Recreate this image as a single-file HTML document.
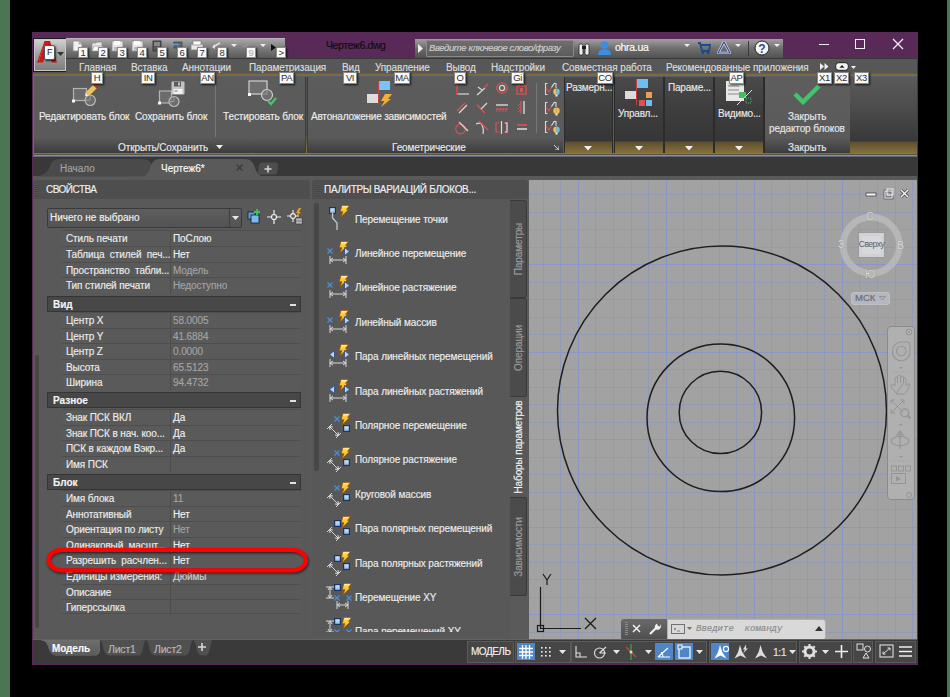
<!DOCTYPE html>
<html><head><meta charset="utf-8"><style>
*{margin:0;padding:0;box-sizing:border-box}
html,body{width:950px;height:697px;overflow:hidden;background:#000;font-family:"Liberation Sans",sans-serif;position:relative}
.a{position:absolute}
.t{position:absolute;white-space:nowrap;font-size:10px;line-height:12px;color:#e8e8e8;-webkit-text-stroke:0.15px currentColor}
.kt{position:absolute;background:#f8f8f8;color:#303030;font-size:9.5px;line-height:9px;text-align:center;border:1px solid #8a8a8a;box-shadow:1px 1px 2px rgba(0,0,0,.75);letter-spacing:-0.4px;overflow:hidden}
</style></head><body>
<div class="a" style="left:0px;top:0px;width:10px;height:697px;background:#4b7553"></div>
<div class="a" style="left:947px;top:0px;width:3px;height:697px;background:#4b7553"></div>
<div class="a" style="left:32px;top:32px;width:886px;height:633px;background:#592a58"></div>
<div class="a" style="left:33px;top:38px;width:34px;height:34px;background:linear-gradient(#d2d2d2,#9a9a9a 55%,#7c7c7c);border:1px solid #1e1e1e;box-shadow:inset 0 0 0 1px #c8c8c8"></div>
<svg class="a" style="left:36px;top:40px;" width="22" height="23" viewBox="0 0 22 23"><path d="M1 22.5 L8.5 1 L14 1 L21 22.5 L16 22.5 L11.5 9 L7 22.5Z" fill="#c81a1c"/><path d="M3 20 L9 3" stroke="#e83a3a" stroke-width="1.2" stroke-dasharray="2 1.5"/><path d="M13 4 L18 20" stroke="#8a1010" stroke-width=".8" stroke-dasharray="1 2"/></svg>
<div class="kt" style="left:44px;top:45px;width:11px;height:15px;line-height:13px;font-size:9px;border-radius:2px;border-color:#555;color:#222">F</div>
<svg class="a" style="left:57px;top:52px;" width="8" height="5" viewBox="0 0 8 5"><path d="M0 0H7L3.5 4Z" fill="#333"/></svg>
<div class="a" style="left:66px;top:38px;width:219px;height:20px;background:linear-gradient(#a8a8a8,#7a7a7a 50%,#5a5a5a);border-top:1px solid #b8b8b8"></div>
<svg class="a" style="left:72px;top:40px;" width="12" height="12" viewBox="0 0 12 12"><path d="M1 1H7L10 4V11H1Z" fill="#f0f0f0" stroke="#8a8a8a" stroke-width=".8"/><path d="M7 1V4H10" fill="#ccc" stroke="#8a8a8a" stroke-width=".6"/></svg>
<svg class="a" style="left:91px;top:40px;" width="13" height="12" viewBox="0 0 13 12"><path d="M1 3H5L6 2H11V11H1Z" fill="#e8e8e8" stroke="#8a8a8a" stroke-width=".8"/><path d="M3 6H12L10 11H1Z" fill="#f8f8f8" stroke="#8a8a8a" stroke-width=".6"/></svg>
<svg class="a" style="left:111px;top:40px;" width="13" height="12" viewBox="0 0 13 12"><rect x="1" y="1" width="11" height="10" fill="#e6e6e6" stroke="#8a8a8a" stroke-width=".8"/><rect x="3" y="1" width="6" height="4" fill="#fafafa"/><rect x="3" y="7" width="7" height="4" fill="#bdbdbd"/></svg>
<svg class="a" style="left:131px;top:40px;" width="13" height="12" viewBox="0 0 13 12"><rect x="1" y="1" width="11" height="10" fill="#e6e6e6" stroke="#8a8a8a" stroke-width=".8"/><rect x="3" y="1" width="6" height="4" fill="#fafafa"/><rect x="3" y="7" width="7" height="4" fill="#bdbdbd"/></svg>
<svg class="a" style="left:151px;top:40px;" width="12" height="12" viewBox="0 0 12 12"><rect x="2" y="1" width="8" height="10" fill="#5a5a5a" stroke="#2a2a2a" stroke-width=".8"/><rect x="3" y="2" width="6" height="4" fill="#888"/></svg>
<svg class="a" style="left:171px;top:40px;" width="13" height="12" viewBox="0 0 13 12"><rect x="3" y="2" width="8" height="6" fill="#666" stroke="#333" stroke-width=".6"/><path d="M1 6Q4 3 8 5" fill="none" stroke="#5aa0e8" stroke-width="1.3"/></svg>
<svg class="a" style="left:190px;top:40px;" width="14" height="12" viewBox="0 0 14 12"><rect x="1" y="4" width="12" height="6" fill="#e8e8e8" stroke="#777" stroke-width=".7"/><rect x="3" y="1" width="8" height="4" fill="#f8f8f8" stroke="#777" stroke-width=".6"/></svg>
<svg class="a" style="left:211px;top:41px;" width="12" height="10" viewBox="0 0 12 10"><path d="M2 6L9 2" stroke="#e0e0e0" stroke-width="1.5"/><path d="M1 6L4 3V8Z" fill="#e0e0e0"/></svg>
<svg class="a" style="left:240px;top:41px;" width="12" height="10" viewBox="0 0 12 10"><path d="M3 6L10 3" stroke="#9a9a9a" stroke-width="1.3"/></svg>
<div class="kt" style="left:78px;top:47px;width:10px;height:11px;line-height:9px">1</div>
<div class="kt" style="left:98px;top:47px;width:10px;height:11px;line-height:9px">2</div>
<div class="kt" style="left:117px;top:47px;width:10px;height:11px;line-height:9px">3</div>
<div class="kt" style="left:137px;top:47px;width:10px;height:11px;line-height:9px">4</div>
<div class="kt" style="left:157px;top:47px;width:10px;height:11px;line-height:9px">5</div>
<div class="kt" style="left:177px;top:47px;width:10px;height:11px;line-height:9px">6</div>
<div class="kt" style="left:197px;top:47px;width:10px;height:11px;line-height:9px">7</div>
<div class="kt" style="left:217px;top:47px;width:10px;height:11px;line-height:9px">8</div>
<div class="kt" style="left:246px;top:47px;width:10px;height:11px;line-height:9px;color:#aaa">9</div>
<svg class="a" style="left:231px;top:44px;" width="6" height="4" viewBox="0 0 6 4"><path d="M0 0H6L3 3Z" fill="#eee"/></svg>
<svg class="a" style="left:260px;top:44px;" width="6" height="4" viewBox="0 0 6 4"><path d="M0 0H6L3 3Z" fill="#eee"/></svg>
<svg class="a" style="left:271px;top:44px;" width="5" height="7" viewBox="0 0 5 7"><path d="M0 0L5 3.5L0 7Z" fill="#111"/></svg>
<div class="kt" style="left:276px;top:47px;width:10px;height:11px;line-height:9px">&gt;</div>
<div class="t" style="left:326px;top:39px;color:#0e0e0e;font-size:10.5px;line-height:13px;letter-spacing:-0.4px">Чертеж6.dwg</div>
<div class="a" style="left:415px;top:39px;width:160px;height:19px;background:linear-gradient(#a0a0a0,#6a6a6a 50%,#505050)"></div>
<svg class="a" style="left:418px;top:44px;" width="6" height="9" viewBox="0 0 6 9"><path d="M0 0L5 4.5L0 9Z" fill="#eee"/></svg>
<div class="a" style="left:426px;top:40px;width:148px;height:17px;background:linear-gradient(#6e6e6e,#5c5c5c);border:1px solid #8a8a8a;border-radius:1px"></div>
<div class="t" style="left:429px;top:42px;color:#cfcfcf;font-style:italic;font-size:9.5px;letter-spacing:-0.4px">Введите ключевое слово/фразу</div>
<div class="a" style="left:575px;top:39px;width:208px;height:19px;background:linear-gradient(#a0a0a0,#6e6e6e 50%,#525252)"></div>
<svg class="a" style="left:578px;top:41px;" width="13" height="15" viewBox="0 0 13 15"><rect x="1" y="3" width="4" height="11" rx="1.5" fill="#eee" stroke="#222" stroke-width=".8"/><rect x="7" y="3" width="4" height="11" rx="1.5" fill="#eee" stroke="#222" stroke-width=".8"/><rect x="4" y="5" width="4" height="3" fill="#222"/></svg>
<svg class="a" style="left:597px;top:40px;" width="15" height="16" viewBox="0 0 15 16"><circle cx="7.5" cy="5" r="3.8" fill="#3d8de0"/><path d="M1 15 Q1 9 7.5 9 Q14 9 14 15Z" fill="#3d8de0"/></svg>
<div class="t" style="left:615px;top:41px;color:#fff;font-size:10.5px;line-height:13px;letter-spacing:-0.3px">ohra.ua</div>
<svg class="a" style="left:684px;top:44px;" width="6" height="4" viewBox="0 0 6 4"><path d="M0 0H6L3 3Z" fill="#eee"/></svg>
<svg class="a" style="left:697px;top:41px;" width="14" height="14" viewBox="0 0 14 14"><path d="M1 2H3L5 10H12L13 4H4" fill="none" stroke="#1a4a90" stroke-width="1.8"/><circle cx="6" cy="12" r="1.4" fill="#1a4a90"/><circle cx="11" cy="12" r="1.4" fill="#1a4a90"/></svg>
<svg class="a" style="left:717px;top:41px;" width="14" height="13" viewBox="0 0 14 13"><path d="M7 1L13 12H1Z" fill="none" stroke="#e8e8f8" stroke-width="2.5"/><path d="M7 1L13 12H1Z" fill="none" stroke="#2a4a8a" stroke-width="1.2"/></svg>
<svg class="a" style="left:735px;top:44px;" width="6" height="4" viewBox="0 0 6 4"><path d="M0 0H6L3 3Z" fill="#eee"/></svg>
<div class="a" style="left:748px;top:41px;width:1px;height:15px;background:#3a3a3a"></div>
<svg class="a" style="left:754px;top:40px;" width="16" height="16" viewBox="0 0 16 16"><circle cx="8" cy="8" r="7" fill="#f4f4f4" stroke="#222" stroke-width="1"/><text x="8" y="12.5" font-size="12" font-weight="bold" text-anchor="middle" fill="#2a4a90" font-family="Liberation Sans">?</text></svg>
<svg class="a" style="left:774px;top:44px;" width="6" height="4" viewBox="0 0 6 4"><path d="M0 0H6L3 3Z" fill="#eee"/></svg>
<div class="a" style="left:819px;top:44px;width:10px;height:1px;background:#f0f0f0"></div>
<div class="a" style="left:855px;top:39px;width:10px;height:10px;border:1px solid #f0f0f0"></div>
<svg class="a" style="left:892px;top:38px;" width="12" height="12" viewBox="0 0 12 12"><path d="M1 1L11 11M11 1L1 11" stroke="#f0f0f0" stroke-width="1.3"/></svg>
<div class="a" style="left:66px;top:58px;width:851px;height:17px;background:#575757"></div>
<div class="a" style="left:66px;top:58px;width:851px;height:1px;background:#383838"></div>
<div class="a" style="left:33px;top:72px;width:33px;height:3px;background:#555"></div>
<div class="t" style="left:79px;top:62px;color:#dcdcdc;font-size:10px;letter-spacing:-0.1px">Главная</div>
<div class="t" style="left:131px;top:62px;color:#dcdcdc;font-size:10px;letter-spacing:-0.1px">Вставка</div>
<div class="t" style="left:182px;top:62px;color:#dcdcdc;font-size:10px;letter-spacing:-0.1px">Аннотации</div>
<div class="t" style="left:249px;top:62px;color:#dcdcdc;font-size:10px;letter-spacing:-0.1px">Параметризация</div>
<div class="t" style="left:342px;top:62px;color:#dcdcdc;font-size:10px;letter-spacing:-0.1px">Вид</div>
<div class="t" style="left:375px;top:62px;color:#dcdcdc;font-size:10px;letter-spacing:-0.1px">Управление</div>
<div class="t" style="left:446px;top:62px;color:#dcdcdc;font-size:10px;letter-spacing:-0.1px">Вывод</div>
<div class="t" style="left:491px;top:62px;color:#dcdcdc;font-size:10px;letter-spacing:-0.1px">Надстройки</div>
<div class="t" style="left:562px;top:62px;color:#dcdcdc;font-size:10px;letter-spacing:-0.1px">Совместная работа</div>
<div class="t" style="left:666px;top:62px;color:#dcdcdc;font-size:10px;letter-spacing:-0.1px">Рекомендованные приложения</div>
<div class="a" style="left:33px;top:73px;width:884px;height:84px;background:#5b5b5b"></div>
<div class="a" style="left:33px;top:73px;width:884px;height:1px;background:#5a5d6c"></div>
<div class="a" style="left:33px;top:74px;width:884px;height:2px;background:#7d6c3a"></div>
<div class="a" style="left:33px;top:76px;width:884px;height:1px;background:#5a5d6c"></div>
<div class="a" style="left:33px;top:153px;width:884px;height:1px;background:#8a7538"></div>
<div class="a" style="left:33px;top:154px;width:884px;height:1px;background:#5a5440"></div>
<div class="a" style="left:33px;top:155px;width:884px;height:1px;background:#a89050"></div>
<div class="a" style="left:33px;top:156px;width:884px;height:1px;background:#60667a"></div>
<svg class="a" style="left:820px;top:63px;" width="9" height="7" viewBox="0 0 9 7"><path d="M0 0L4 3.5L0 7ZM4.5 0L8.5 3.5L4.5 7Z" fill="#eee"/></svg>
<svg class="a" style="left:835px;top:62px;" width="14" height="9" viewBox="0 0 14 9"><rect x=".7" y=".7" width="12.6" height="7.6" rx="3" fill="#f4f4f4" stroke="#222" stroke-width="1"/><path d="M4.5 5.8H9.5L7 3Z" fill="#222"/></svg>
<svg class="a" style="left:851px;top:66px;" width="5" height="3" viewBox="0 0 5 3"><path d="M0 0H5L2.5 3Z" fill="#eee"/></svg>
<div class="a" style="left:33px;top:77px;width:273px;height:76px;background:linear-gradient(#5c5c5c 0%,#5a5a5a 80%,#3c3c3c 100%)"></div>
<div class="a" style="left:305px;top:77px;width:1px;height:76px;background:#3c3c3c"></div>
<div class="a" style="left:306px;top:77px;width:1px;height:76px;background:linear-gradient(#505050,#505050 75%,#8a7538)"></div>
<div class="a" style="left:307px;top:77px;width:1px;height:76px;background:#3c3c3c"></div>
<svg class="a" style="left:72px;top:87px;" width="26" height="22" viewBox="0 0 26 22"><rect x="1.5" y="1.5" width="13" height="12" fill="#6c6c6c" stroke="#b4b4b4" stroke-width="1.2"/><circle cx="18.2" cy="13.3" r="5.2" fill="#727272" fill-opacity=".8" stroke="#bcbcbc" stroke-width="1.2"/><path d="M18.2 8.5V13.3H13.5" stroke="#9a9a9a" fill="none"/><rect x="0" y="12.5" width="3" height="3" fill="#f4f4f4"/></svg>
<svg class="a" style="left:84px;top:82px;" width="14" height="14" viewBox="0 0 14 14"><path d="M1.5 10.5L9 3L12.5 6.5L5 14Z" fill="#f0c060" stroke="#c09040" stroke-width=".5"/><path d="M9.5 2.5L11 1L14 4L12.5 5.5Z" fill="#d82020"/><path d="M1.5 10.5L5 14L1 15Z" fill="#e8e8e8"/></svg>
<svg class="a" style="left:158px;top:89px;" width="26" height="22" viewBox="0 0 26 22"><rect x="1.5" y="2" width="12" height="12" fill="#6c6c6c" stroke="#b4b4b4" stroke-width="1.2"/><circle cx="16" cy="12.5" r="5" fill="#727272" fill-opacity=".8" stroke="#bcbcbc" stroke-width="1.2"/><path d="M16 7.5V12.5H11" stroke="#9a9a9a" fill="none"/><rect x="0" y="12.5" width="3" height="3" fill="#f4f4f4"/></svg>
<svg class="a" style="left:171px;top:81px;" width="14" height="14" viewBox="0 0 14 14"><rect x=".5" y=".5" width="13" height="13" rx="1" fill="#c4c4c4"/><rect x="3" y="1" width="7" height="4.5" fill="#5a5a5a"/><rect x="7" y="1.5" width="2" height="3" fill="#c4c4c4"/><rect x="2.5" y="8" width="9" height="5" fill="#f0f0f0"/><rect x="3.5" y="9.5" width="3" height="1" fill="#777"/></svg>
<div class="t" style="left:39px;top:111px;font-size:10px;letter-spacing:-0.15px;color:#ececec">Редактировать блок</div>
<div class="t" style="left:135px;top:111px;font-size:10px;letter-spacing:-0.1px;color:#ececec">Сохранить блок</div>
<div class="a" style="left:215px;top:85px;width:1px;height:52px;background:#777"></div>
<svg class="a" style="left:248px;top:80px;" width="26" height="22" viewBox="0 0 26 22"><rect x="1" y="1" width="18" height="13" fill="#6e6e6e" stroke="#d0d0d0" stroke-width="1.2"/><circle cx="19" cy="15" r="5.5" fill="#777" fill-opacity=".7" stroke="#d0d0d0" stroke-width="1.2"/><rect x="0" y="13" width="3" height="3" fill="#fff"/></svg>
<svg class="a" style="left:267px;top:97px;" width="10" height="9" viewBox="0 0 10 9"><path d="M1 4L4 7L9 1" fill="none" stroke="#48c46a" stroke-width="2.2"/></svg>
<div class="t" style="left:223px;top:111px;font-size:10px;letter-spacing:-0.1px;color:#ececec">Тестировать блок</div>
<div class="t" style="left:118px;top:142px;font-size:10px;color:#e8e8e8;letter-spacing:-0.1px">Открыть/Сохранить</div>
<svg class="a" style="left:216px;top:145px;" width="7" height="4" viewBox="0 0 7 4"><path d="M0 0H7L3.5 4Z" fill="#eee"/></svg>
<div class="a" style="left:308px;top:77px;width:255px;height:76px;background:linear-gradient(#5c5c5c 0%,#5a5a5a 80%,#3c3c3c 100%)"></div>
<svg class="a" style="left:366px;top:80px;" width="28" height="28" viewBox="0 0 28 28"><rect x="1" y="14" width="11" height="9" fill="#dcdcdc"/><rect x="13" y="1" width="11" height="9" fill="#78c4f4"/><rect x="12" y="1" width="1.2" height="23" fill="#c84040"/><path d="M19 14H26L22 19H25L15 27L18.5 21H15Z" fill="#f4b030"/></svg>
<div class="t" style="left:311px;top:111px;font-size:10px;letter-spacing:-0.2px;color:#ececec">Автоналожение зависимостей</div>
<div class="t" style="left:392px;top:142px;font-size:10px;color:#e8e8e8;letter-spacing:-0.1px">Геометрические</div>
<svg class="a" style="left:554px;top:145px;" width="5" height="5" viewBox="0 0 5 5"><path d="M0 0L5 5M5 1V5H1" stroke="#ddd" stroke-width="1" fill="none"/></svg>
<svg class="a" style="left:456px;top:83px;" width="14" height="14" viewBox="0 0 14 14"><path d="M1 0V11" stroke="#e05050" stroke-width="1.2"/><path d="M1 11H13" stroke="#d8d8d8" stroke-width="1.2"/><rect x="0" y="10" width="2" height="2" fill="#e05050"/></svg>
<svg class="a" style="left:476px;top:83px;" width="14" height="14" viewBox="0 0 14 14"><path d="M1 12L9 5" stroke="#d8d8d8" stroke-width="1.2"/><path d="M8 5L12 1" stroke="#e05050" stroke-width="1.2"/><path d="M2 4L6 7" stroke="#d8d8d8" stroke-width="1.2"/></svg>
<svg class="a" style="left:496px;top:82px;" width="14" height="14" viewBox="0 0 14 14"><circle cx="6" cy="6" r="5.2" fill="none" stroke="#e05050" stroke-width="1.2"/><circle cx="6" cy="6" r="2.6" fill="none" stroke="#d8d8d8" stroke-width="1.3"/></svg>
<svg class="a" style="left:516px;top:84px;" width="14" height="14" viewBox="0 0 14 14"><rect x="1" y="2" width="9" height="8" fill="none" stroke="#e05050" stroke-width="1.3"/><rect x="4" y="4" width="3" height="4" fill="#e05050"/><path d="M3 0V2M8 0V2" stroke="#e05050"/></svg>
<svg class="a" style="left:456px;top:102px;" width="14" height="14" viewBox="0 0 14 14"><path d="M1 9L9 1" stroke="#e05050" stroke-width="1.2"/><path d="M3 11L11 3" stroke="#d8d8d8" stroke-width="1.2"/></svg>
<svg class="a" style="left:476px;top:102px;" width="14" height="14" viewBox="0 0 14 14"><path d="M1 3L9 11" stroke="#e05050" stroke-width="1.2"/><path d="M5 7L11 1" stroke="#d8d8d8" stroke-width="1.2"/></svg>
<svg class="a" style="left:495px;top:103px;" width="14" height="14" viewBox="0 0 14 14"><path d="M1 2H13" stroke="#d8d8d8" stroke-width="1.4"/><path d="M1 6H13" stroke="#e05050" stroke-width="1.2"/><path d="M3 6L1 9M6 6L4 9M9 6L7 9M12 6L10 9" stroke="#e05050"/></svg>
<svg class="a" style="left:516px;top:101px;" width="14" height="14" viewBox="0 0 14 14"><path d="M8 0V13" stroke="#d8d8d8" stroke-width="1.4"/><path d="M5 0V13" stroke="#e05050" stroke-width="1.2"/><path d="M5 2L2 5M5 5L2 8M5 8L2 11" stroke="#e05050"/></svg>
<svg class="a" style="left:455px;top:121px;" width="14" height="14" viewBox="0 0 14 14"><circle cx="5.5" cy="8" r="4.8" fill="none" stroke="#e05050" stroke-width="1.2"/><path d="M4 1L13 10" stroke="#d8d8d8" stroke-width="1.2"/></svg>
<svg class="a" style="left:476px;top:121px;" width="14" height="14" viewBox="0 0 14 14"><path d="M0 3Q5 1 6 4Q8 8 7 13" fill="none" stroke="#d8d8d8" stroke-width="1.2"/><path d="M3 0L12 9" stroke="#e05050" stroke-width="1.2"/></svg>
<svg class="a" style="left:495px;top:121px;" width="14" height="14" viewBox="0 0 14 14"><path d="M4 2H1V11H4M9 2H12V11H9" fill="none" stroke="#e05050" stroke-width="1.2"/><path d="M6.5 0V13" stroke="#d8d8d8" stroke-width="1.2"/><path d="M10 2H12V11H10" fill="none" stroke="#d8d8d8" stroke-width="1.2"/></svg>
<svg class="a" style="left:516px;top:123px;" width="14" height="14" viewBox="0 0 14 14"><path d="M1 2H11" stroke="#e05050" stroke-width="1.6"/><path d="M1 6H11" stroke="#d8d8d8" stroke-width="1.6"/></svg>
<div class="a" style="left:536px;top:83px;width:1px;height:50px;background:#777"></div>
<svg class="a" style="left:544px;top:82px;" width="16" height="15" viewBox="0 0 16 15"><path d="M3.5 1.5H1.5V12.5H3.5M10 1.5H12V6" fill="none" stroke="#d8d8d8" stroke-width="1.1"/><path d="M2 6L5 10L7.5 5.5" fill="none" stroke="#e05050" stroke-width="1.1"/><path d="M7.5 5.5L10.5 1" fill="none" stroke="#e8e8e8" stroke-width="1.1"/><path d="M12.5 6.5A3.2 3.2 0 0 0 12.5 12.9Z" fill="#f0c050"/><path d="M12.5 6.5A3.2 3.2 0 0 1 12.5 12.9Z" fill="#6cc0f0"/><rect x="11.5" y="12.5" width="2" height="2" fill="#eee"/></svg>
<svg class="a" style="left:544px;top:101px;" width="16" height="15" viewBox="0 0 16 15"><path d="M3.5 1.5H1.5V12.5H3.5M10 1.5H12V6" fill="none" stroke="#d8d8d8" stroke-width="1.1"/><path d="M2 6L5 10L7.5 5.5" fill="none" stroke="#e05050" stroke-width="1.1"/><path d="M7.5 5.5L10.5 1" fill="none" stroke="#e8e8e8" stroke-width="1.1"/><path d="M12.5 6.5A3.2 3.2 0 0 0 12.5 12.9Z" fill="#f0c050"/><path d="M12.5 6.5A3.2 3.2 0 0 1 12.5 12.9Z" fill="#f0c050"/><rect x="11.5" y="12.5" width="2" height="2" fill="#eee"/></svg>
<svg class="a" style="left:544px;top:120px;" width="16" height="15" viewBox="0 0 16 15"><path d="M3.5 1.5H1.5V12.5H3.5M10 1.5H12V6" fill="none" stroke="#d8d8d8" stroke-width="1.1"/><path d="M2 6L5 10L7.5 5.5" fill="none" stroke="#e05050" stroke-width="1.1"/><path d="M7.5 5.5L10.5 1" fill="none" stroke="#e8e8e8" stroke-width="1.1"/><path d="M12.5 6.5A3.2 3.2 0 0 0 12.5 12.9Z" fill="#f0c050"/><path d="M12.5 6.5A3.2 3.2 0 0 1 12.5 12.9Z" fill="#6cc0f0"/><rect x="11.5" y="12.5" width="2" height="2" fill="#eee"/></svg>
<div class="a" style="left:564px;top:77px;width:49px;height:76px;background:linear-gradient(#4a4a4a 0%,#3e3e3e 40%,#363636 84%,#5e5030 86%,#86713a 100%);border-left:1px solid #2c2c2c;border-right:1px solid #2c2c2c"></div>
<svg class="a" style="left:584px;top:146px;" width="8" height="5" viewBox="0 0 8 5"><path d="M0 0H8L4 4.5Z" fill="#f0f0f0"/></svg>
<div class="a" style="left:614px;top:77px;width:50px;height:76px;background:linear-gradient(#4a4a4a 0%,#3e3e3e 40%,#363636 84%,#5e5030 86%,#86713a 100%);border-left:1px solid #2c2c2c;border-right:1px solid #2c2c2c"></div>
<svg class="a" style="left:635px;top:146px;" width="8" height="5" viewBox="0 0 8 5"><path d="M0 0H8L4 4.5Z" fill="#f0f0f0"/></svg>
<div class="a" style="left:664px;top:77px;width:50px;height:76px;background:linear-gradient(#4a4a4a 0%,#3e3e3e 40%,#363636 84%,#5e5030 86%,#86713a 100%);border-left:1px solid #2c2c2c;border-right:1px solid #2c2c2c"></div>
<svg class="a" style="left:685px;top:146px;" width="8" height="5" viewBox="0 0 8 5"><path d="M0 0H8L4 4.5Z" fill="#f0f0f0"/></svg>
<div class="a" style="left:714px;top:77px;width:50px;height:76px;background:linear-gradient(#4a4a4a 0%,#3e3e3e 40%,#363636 84%,#5e5030 86%,#86713a 100%);border-left:1px solid #2c2c2c;border-right:1px solid #2c2c2c"></div>
<svg class="a" style="left:735px;top:146px;" width="8" height="5" viewBox="0 0 8 5"><path d="M0 0H8L4 4.5Z" fill="#f0f0f0"/></svg>
<div class="t" style="left:566px;top:82px;font-size:10px;color:#e8e8e8;letter-spacing:-0.2px">Размерн...</div>
<div class="t" style="left:618px;top:108px;font-size:10px;color:#e8e8e8;letter-spacing:-0.2px">Управл...</div>
<div class="t" style="left:668px;top:82px;font-size:10px;color:#e8e8e8;letter-spacing:-0.2px">Параме...</div>
<div class="t" style="left:718px;top:108px;font-size:10px;color:#e8e8e8;letter-spacing:-0.2px">Видимо...</div>
<svg class="a" style="left:624px;top:79px;" width="30" height="28" viewBox="0 0 30 28"><rect x="13" y="0" width="11" height="9" fill="#6cc0f0"/><rect x="12" y="0" width="1" height="26" fill="#c84040"/><rect x="1" y="12" width="11" height="8" fill="#dcdcdc"/><rect x="22" y="13" width="6" height="6" fill="#e8a050"/><rect x="15" y="21" width="6" height="6" fill="#e05050"/><rect x="22" y="21" width="6" height="6" fill="#6cc0f0"/></svg>
<svg class="a" style="left:725px;top:79px;" width="28" height="27" viewBox="0 0 28 27"><rect x="1" y="2" width="18" height="20" fill="#e8e8e8"/><path d="M3 7H14M3 11H14M3 15H14" stroke="#888" stroke-width="1.2"/><rect x="14" y="13" width="7" height="6" fill="#40c060"/><path d="M12 26L27 11" stroke="#ddd" stroke-width="1"/><rect x="21" y="19" width="5" height="5" fill="none" stroke="#40c060" stroke-dasharray="1 1"/></svg>
<div class="a" style="left:764px;top:77px;width:86px;height:76px;background:linear-gradient(#5e5e5e 0%,#5a5a5a 80%,#3c3c3c 100%);border-left:1px solid #2a2a2a"></div>
<svg class="a" style="left:793px;top:84px;" width="28" height="21" viewBox="0 0 28 21"><path d="M2 10L10 18L26 2" fill="none" stroke="#44c46a" stroke-width="4.5"/></svg>
<div class="t" style="left:788px;top:111px;font-size:10px;color:#e8e8e8">Закрыть</div>
<div class="t" style="left:769px;top:123px;font-size:10px;color:#e8e8e8;letter-spacing:-0.1px">редактор блоков</div>
<div class="t" style="left:788px;top:142px;font-size:10px;color:#e8e8e8">Закрыть</div>
<div class="a" style="left:850px;top:77px;width:67px;height:76px;background:linear-gradient(#5a5a5a 0%,#4c4c4c 40%,#383838 84%,#5e5030 86%,#86713a 100%)"></div>
<div class="kt" style="left:91px;top:72px;width:12px;height:12px;">H</div>
<div class="kt" style="left:141px;top:72px;width:14px;height:12px;">IN</div>
<div class="kt" style="left:200px;top:72px;width:15px;height:12px;">AN</div>
<div class="kt" style="left:279px;top:72px;width:15px;height:12px;">PA</div>
<div class="kt" style="left:343px;top:72px;width:14px;height:12px;">VI</div>
<div class="kt" style="left:394px;top:72px;width:16px;height:12px;">MA</div>
<div class="kt" style="left:454px;top:72px;width:12px;height:12px;">O</div>
<div class="kt" style="left:511px;top:72px;width:13px;height:12px;">Gi</div>
<div class="kt" style="left:597px;top:72px;width:16px;height:12px;">CO</div>
<div class="kt" style="left:729px;top:72px;width:15px;height:12px;">AP</div>
<div class="kt" style="left:817px;top:72px;width:15px;height:12px;">X1</div>
<div class="kt" style="left:834px;top:72px;width:15px;height:12px;">X2</div>
<div class="kt" style="left:854px;top:72px;width:15px;height:12px;">X3</div>
<div class="a" style="left:33px;top:74px;width:1px;height:82px;background:#7d6c3a"></div>
<div class="a" style="left:33px;top:157px;width:884px;height:20px;background:#383838"></div>
<div class="a" style="left:33px;top:176px;width:884px;height:4px;background:#5a5a5a"></div>
<svg class="a" style="left:33px;top:158px;" width="122" height="19" viewBox="0 0 122 19"><path d="M0 18.5 Q14 18 17 8 Q19 1 26 1 H110 Q117 1 119 8 Q121 16 122 18.5Z" fill="#4a4a4a"/></svg>
<div class="t" style="left:60px;top:163px;color:#a4a4a4;font-size:10px;line-height:12px">Начало</div>
<svg class="a" style="left:133px;top:158px;" width="140" height="22" viewBox="0 0 140 22"><path d="M0 22 Q14 21 17 10 Q19 1 27 1 H112 Q120 1 122 10 Q125 20 140 22Z" fill="#5a5a5a"/></svg>
<div class="t" style="left:161px;top:163px;color:#fafafa;font-size:10px;line-height:12px">Чертеж6*</div>
<svg class="a" style="left:236px;top:164px;" width="7" height="7" viewBox="0 0 7 7"><path d="M0.5 0.5L6.5 6.5M6.5 0.5L0.5 6.5" stroke="#3c3c3c" stroke-width="1.5"/></svg>
<svg class="a" style="left:257px;top:162px;" width="22" height="13" viewBox="0 0 22 13"><path d="M1 11 Q0 12.5 3 12.5 H17 Q20 12.5 20.5 9 L21 4 Q21 0.5 18 0.5 H5 Q2.5 0.5 2 3Z" fill="#4e4e4e"/></svg>
<svg class="a" style="left:264px;top:165px;" width="8" height="8" viewBox="0 0 8 8"><path d="M4 .5V7.5M.5 4H7.5" stroke="#d8d8d8" stroke-width="1.5"/></svg>
<div class="a" style="left:33px;top:180px;width:884px;height:460px;background:#5a5a5a"></div>
<div class="a" style="left:33px;top:180px;width:277px;height:19px;background:#4e4e4e;border-radius:3px 3px 0 0"></div>
<div class="a" style="left:35px;top:184px;width:3px;height:12px;background:repeating-linear-gradient(#555 0 1px,#444 1px 2px)"></div>
<div class="t" style="left:46px;top:183px;font-size:10px;line-height:13px;color:#f0f0f0;letter-spacing:-0.5px">СВОЙСТВА</div>
<div class="a" style="left:33px;top:199px;width:277px;height:441px;background:#595959"></div>
<div class="a" style="left:35px;top:355px;width:4px;height:273px;background:#474747;border-radius:2px"></div>
<div class="a" style="left:47px;top:208px;width:195px;height:20px;background:linear-gradient(#5e5e5e,#535353);border:1px solid #3a3a3a;border-radius:2px"></div>
<div class="a" style="left:229px;top:209px;width:1px;height:18px;background:#3e3e3e"></div>
<svg class="a" style="left:232px;top:216px;" width="7" height="4" viewBox="0 0 7 4"><path d="M0 0H7L3.5 4Z" fill="#e8e8e8"/></svg>
<div class="t" style="left:50px;top:212px;font-size:10px;color:#f0f0f0">Ничего не выбрано</div>
<svg class="a" style="left:247px;top:209px;" width="14" height="15" viewBox="0 0 14 15"><rect x="1" y="3" width="7" height="7" fill="#5aa0e0" stroke="#1a1a1a" stroke-width=".8"/><rect x="4" y="6" width="8" height="8" fill="#7ab8f0" stroke="#1a1a1a" stroke-width=".8"/><path d="M10 0V6M7 3H13" stroke="#40c060" stroke-width="1.8"/></svg>
<svg class="a" style="left:267px;top:210px;" width="14" height="14" viewBox="0 0 14 14"><circle cx="7" cy="7" r="2.5" fill="none" stroke="#f0f0f0" stroke-width="1.2"/><path d="M7 0V4.5M7 9.5V14M0 7H4.5M9.5 7H14" stroke="#f0f0f0" stroke-width="1.2"/></svg>
<svg class="a" style="left:287px;top:208px;" width="16" height="17" viewBox="0 0 16 17"><circle cx="6" cy="8" r="2.4" fill="none" stroke="#f0f0f0" stroke-width="1.1"/><path d="M6 2V5.5M6 10.5V14M0 8H3.5M8.5 8H12" stroke="#f0f0f0" stroke-width="1.1"/><path d="M12 0L9 5H11L9 9L14 4H12L14 0Z" fill="#f0a020"/><rect x="9" y="10" width="6" height="6" fill="#ddd" stroke="#333" stroke-width=".6"/><path d="M11 10V16M13 10V16M9 13H15" stroke="#555" stroke-width=".6"/></svg>
<div class="a" style="left:62px;top:230px;width:239px;height:16px;background:#5a5a5a;border-top:1px solid #4e4e4e"></div>
<div class="a" style="left:170px;top:230px;width:1px;height:16px;background:#4e4e4e"></div>
<div class="t" style="left:66px;top:233px;font-size:10px;color:#ececec;letter-spacing:-0.1px">Стиль печати</div>
<div class="t" style="left:173px;top:233px;font-size:10px;color:#f0f0f0;letter-spacing:-0.1px">ПоСлою</div>
<div class="a" style="left:62px;top:246px;width:239px;height:16px;background:#5a5a5a;border-top:1px solid #4e4e4e"></div>
<div class="a" style="left:170px;top:246px;width:1px;height:16px;background:#4e4e4e"></div>
<div class="t" style="left:66px;top:249px;font-size:10px;color:#ececec;letter-spacing:-0.1px">Таблица&nbsp; стилей&nbsp; печ...</div>
<div class="t" style="left:173px;top:249px;font-size:10px;color:#f0f0f0;letter-spacing:-0.1px">Нет</div>
<div class="a" style="left:62px;top:262px;width:239px;height:16px;background:#5a5a5a;border-top:1px solid #4e4e4e"></div>
<div class="a" style="left:170px;top:262px;width:1px;height:16px;background:#4e4e4e"></div>
<div class="t" style="left:66px;top:265px;font-size:10px;color:#ececec;letter-spacing:-0.1px">Пространство&nbsp; табли...</div>
<div class="t" style="left:173px;top:265px;font-size:10px;color:#a4a4a4;letter-spacing:-0.1px">Модель</div>
<div class="a" style="left:62px;top:277px;width:239px;height:16px;background:#5a5a5a;border-top:1px solid #4e4e4e"></div>
<div class="a" style="left:170px;top:277px;width:1px;height:16px;background:#4e4e4e"></div>
<div class="t" style="left:66px;top:280px;font-size:10px;color:#ececec;letter-spacing:-0.1px">Тип стилей печати</div>
<div class="t" style="left:173px;top:280px;font-size:10px;color:#a4a4a4;letter-spacing:-0.1px">Недоступно</div>
<div class="a" style="left:47px;top:296px;width:254px;height:16px;background:#474747;border:1px solid #353535"></div>
<div class="t" style="left:53px;top:299px;font-size:10px;font-weight:bold;color:#f4f4f4">Вид</div>
<div class="a" style="left:290px;top:304px;width:6px;height:2px;background:#e0e0e0"></div>
<div class="a" style="left:62px;top:312px;width:239px;height:16px;background:#5a5a5a;border-top:1px solid #4e4e4e"></div>
<div class="a" style="left:170px;top:312px;width:1px;height:16px;background:#4e4e4e"></div>
<div class="t" style="left:66px;top:315px;font-size:10px;color:#ececec;letter-spacing:-0.1px">Центр X</div>
<div class="t" style="left:173px;top:315px;font-size:10px;color:#a4a4a4;letter-spacing:-0.1px">58.0005</div>
<div class="a" style="left:62px;top:328px;width:239px;height:16px;background:#5a5a5a;border-top:1px solid #4e4e4e"></div>
<div class="a" style="left:170px;top:328px;width:1px;height:16px;background:#4e4e4e"></div>
<div class="t" style="left:66px;top:331px;font-size:10px;color:#ececec;letter-spacing:-0.1px">Центр Y</div>
<div class="t" style="left:173px;top:331px;font-size:10px;color:#a4a4a4;letter-spacing:-0.1px">41.6884</div>
<div class="a" style="left:62px;top:343px;width:239px;height:16px;background:#5a5a5a;border-top:1px solid #4e4e4e"></div>
<div class="a" style="left:170px;top:343px;width:1px;height:16px;background:#4e4e4e"></div>
<div class="t" style="left:66px;top:346px;font-size:10px;color:#ececec;letter-spacing:-0.1px">Центр Z</div>
<div class="t" style="left:173px;top:346px;font-size:10px;color:#a4a4a4;letter-spacing:-0.1px">0.0000</div>
<div class="a" style="left:62px;top:359px;width:239px;height:16px;background:#5a5a5a;border-top:1px solid #4e4e4e"></div>
<div class="a" style="left:170px;top:359px;width:1px;height:16px;background:#4e4e4e"></div>
<div class="t" style="left:66px;top:362px;font-size:10px;color:#ececec;letter-spacing:-0.1px">Высота</div>
<div class="t" style="left:173px;top:362px;font-size:10px;color:#a4a4a4;letter-spacing:-0.1px">65.5123</div>
<div class="a" style="left:62px;top:374px;width:239px;height:16px;background:#5a5a5a;border-top:1px solid #4e4e4e"></div>
<div class="a" style="left:170px;top:374px;width:1px;height:16px;background:#4e4e4e"></div>
<div class="t" style="left:66px;top:377px;font-size:10px;color:#ececec;letter-spacing:-0.1px">Ширина</div>
<div class="t" style="left:173px;top:377px;font-size:10px;color:#a4a4a4;letter-spacing:-0.1px">94.4732</div>
<div class="a" style="left:47px;top:392px;width:254px;height:16px;background:#474747;border:1px solid #353535"></div>
<div class="t" style="left:53px;top:395px;font-size:10px;font-weight:bold;color:#f4f4f4">Разное</div>
<div class="a" style="left:290px;top:400px;width:6px;height:2px;background:#e0e0e0"></div>
<div class="a" style="left:62px;top:409px;width:239px;height:16px;background:#5a5a5a;border-top:1px solid #4e4e4e"></div>
<div class="a" style="left:170px;top:409px;width:1px;height:16px;background:#4e4e4e"></div>
<div class="t" style="left:66px;top:412px;font-size:10px;color:#ececec;letter-spacing:-0.1px">Знак ПСК ВКЛ</div>
<div class="t" style="left:173px;top:412px;font-size:10px;color:#f0f0f0;letter-spacing:-0.1px">Да</div>
<div class="a" style="left:62px;top:425px;width:239px;height:16px;background:#5a5a5a;border-top:1px solid #4e4e4e"></div>
<div class="a" style="left:170px;top:425px;width:1px;height:16px;background:#4e4e4e"></div>
<div class="t" style="left:66px;top:428px;font-size:10px;color:#ececec;letter-spacing:-0.1px">Знак ПСК в нач. коо...</div>
<div class="t" style="left:173px;top:428px;font-size:10px;color:#f0f0f0;letter-spacing:-0.1px">Да</div>
<div class="a" style="left:62px;top:440px;width:239px;height:16px;background:#5a5a5a;border-top:1px solid #4e4e4e"></div>
<div class="a" style="left:170px;top:440px;width:1px;height:16px;background:#4e4e4e"></div>
<div class="t" style="left:66px;top:443px;font-size:10px;color:#ececec;letter-spacing:-0.1px">ПСК в каждом Вэкр...</div>
<div class="t" style="left:173px;top:443px;font-size:10px;color:#f0f0f0;letter-spacing:-0.1px">Да</div>
<div class="a" style="left:62px;top:456px;width:239px;height:16px;background:#5a5a5a;border-top:1px solid #4e4e4e"></div>
<div class="a" style="left:170px;top:456px;width:1px;height:16px;background:#4e4e4e"></div>
<div class="t" style="left:66px;top:459px;font-size:10px;color:#ececec;letter-spacing:-0.1px">Имя ПСК</div>
<div class="a" style="left:47px;top:474px;width:254px;height:16px;background:#474747;border:1px solid #353535"></div>
<div class="t" style="left:53px;top:477px;font-size:10px;font-weight:bold;color:#f4f4f4">Блок</div>
<div class="a" style="left:290px;top:482px;width:6px;height:2px;background:#e0e0e0"></div>
<div class="a" style="left:62px;top:490px;width:239px;height:16px;background:#5a5a5a;border-top:1px solid #4e4e4e"></div>
<div class="a" style="left:170px;top:490px;width:1px;height:16px;background:#4e4e4e"></div>
<div class="t" style="left:66px;top:493px;font-size:10px;color:#ececec;letter-spacing:-0.1px">Имя блока</div>
<div class="t" style="left:173px;top:493px;font-size:10px;color:#a4a4a4;letter-spacing:-0.1px">11</div>
<div class="a" style="left:62px;top:506px;width:239px;height:16px;background:#5a5a5a;border-top:1px solid #4e4e4e"></div>
<div class="a" style="left:170px;top:506px;width:1px;height:16px;background:#4e4e4e"></div>
<div class="t" style="left:66px;top:509px;font-size:10px;color:#ececec;letter-spacing:-0.1px">Аннотативный</div>
<div class="t" style="left:173px;top:509px;font-size:10px;color:#f0f0f0;letter-spacing:-0.1px">Нет</div>
<div class="a" style="left:62px;top:521px;width:239px;height:16px;background:#5a5a5a;border-top:1px solid #4e4e4e"></div>
<div class="a" style="left:170px;top:521px;width:1px;height:16px;background:#4e4e4e"></div>
<div class="t" style="left:66px;top:524px;font-size:10px;color:#ececec;letter-spacing:-0.1px">Ориентация по листу</div>
<div class="t" style="left:173px;top:524px;font-size:10px;color:#a4a4a4;letter-spacing:-0.1px">Нет</div>
<div class="a" style="left:62px;top:537px;width:239px;height:16px;background:#5a5a5a;border-top:1px solid #4e4e4e"></div>
<div class="a" style="left:170px;top:537px;width:1px;height:16px;background:#4e4e4e"></div>
<div class="t" style="left:66px;top:540px;font-size:10px;color:#ececec;letter-spacing:-0.1px">Одинаковый&nbsp; масшт...</div>
<div class="t" style="left:173px;top:540px;font-size:10px;color:#f0f0f0;letter-spacing:-0.1px">Нет</div>
<div class="a" style="left:62px;top:552px;width:239px;height:16px;background:#5a5a5a;border-top:1px solid #4e4e4e"></div>
<div class="a" style="left:170px;top:552px;width:1px;height:16px;background:#4e4e4e"></div>
<div class="t" style="left:66px;top:555px;font-size:10px;color:#ececec;letter-spacing:-0.1px">Разрешить&nbsp; расчлен...</div>
<div class="t" style="left:173px;top:555px;font-size:10px;color:#f0f0f0;letter-spacing:-0.1px">Нет</div>
<div class="a" style="left:62px;top:568px;width:239px;height:16px;background:#5a5a5a;border-top:1px solid #4e4e4e"></div>
<div class="a" style="left:170px;top:568px;width:1px;height:16px;background:#4e4e4e"></div>
<div class="t" style="left:66px;top:571px;font-size:10px;color:#ececec;letter-spacing:-0.1px">Единицы измерения:</div>
<div class="t" style="left:173px;top:571px;font-size:10px;color:#d0d0d0;letter-spacing:-0.1px">Дюймы</div>
<div class="a" style="left:62px;top:584px;width:239px;height:16px;background:#5a5a5a;border-top:1px solid #4e4e4e"></div>
<div class="a" style="left:170px;top:584px;width:1px;height:16px;background:#4e4e4e"></div>
<div class="t" style="left:66px;top:587px;font-size:10px;color:#ececec;letter-spacing:-0.1px">Описание</div>
<div class="a" style="left:62px;top:599px;width:239px;height:16px;background:#5a5a5a;border-top:1px solid #4e4e4e"></div>
<div class="a" style="left:170px;top:599px;width:1px;height:16px;background:#4e4e4e"></div>
<div class="t" style="left:66px;top:602px;font-size:10px;color:#ececec;letter-spacing:-0.1px">Гиперссылка</div>
<div class="a" style="left:62px;top:613px;width:239px;height:1px;background:#4e4e4e"></div>
<div class="a" style="left:312px;top:180px;width:216px;height:19px;background:#4e4e4e;border-radius:3px 3px 0 0"></div>
<div class="a" style="left:316px;top:184px;width:3px;height:12px;background:repeating-linear-gradient(#555 0 1px,#444 1px 2px)"></div>
<div class="t" style="left:324px;top:183px;font-size:10px;line-height:13px;color:#f0f0f0;letter-spacing:-0.3px">ПАЛИТРЫ ВАРИАЦИЙ БЛОКОВ...</div>
<div class="a" style="left:312px;top:199px;width:198px;height:441px;background:#585858"></div>
<div class="a" style="left:314px;top:203px;width:5px;height:268px;background:#474747;border-radius:2px"></div>
<svg width="0" height="0" style="position:absolute"><defs><linearGradient id="bg" x1="0" y1="0" x2="0" y2="1"><stop offset="0" stop-color="#fff4d0"/><stop offset=".25" stop-color="#ffd040"/><stop offset=".6" stop-color="#f8c020"/><stop offset="1" stop-color="#e87800"/></linearGradient><linearGradient id="sq" x1="0" y1="0" x2="0" y2="1"><stop offset="0" stop-color="#d8ecfc"/><stop offset="1" stop-color="#8ab8e8"/></linearGradient></defs></svg>
<div class="t" style="left:355px;top:214px;font-size:10px;color:#ececec;letter-spacing:-0.1px">Перемещение точки</div>
<svg class="a" style="left:329px;top:207px;" width="7" height="7" viewBox="0 0 7 7"><rect x=".6" y=".6" width="5.8" height="5.8" fill="url(#sq)" stroke="#1c3460" stroke-width="1.2"/></svg>
<svg class="a" style="left:330px;top:213px;" width="9" height="18" viewBox="0 0 9 18"><path d="M2.5 0V5L7 10V17" stroke="#c8c8c8" stroke-width="1.3" fill="none"/></svg>
<svg class="a" style="left:340px;top:205px;" width="10" height="13" viewBox="0 0 10 13"><path d="M1.9 0.4H9.4L6.6 4.4H8.6L0.7 12.6L2.8 6.7H0.2Z" fill="url(#bg)" stroke="#9a4a00" stroke-width=".7" stroke-linejoin="round"/></svg>
<div class="t" style="left:355px;top:248px;font-size:10px;color:#ececec;letter-spacing:-0.1px">Линейное перемещение</div>
<svg class="a" style="left:327px;top:248px;" width="6" height="6" viewBox="0 0 6 6"><path d="M0.5 0.5L5.5 5.5M5.5 0.5L0.5 5.5" stroke="#4a90e0" stroke-width="1.1"/></svg>
<svg class="a" style="left:339px;top:241px;" width="10" height="13" viewBox="0 0 10 13"><path d="M1.9 0.4H9.4L6.6 4.4H8.6L0.7 12.6L2.8 6.7H0.2Z" fill="url(#bg)" stroke="#9a4a00" stroke-width=".7" stroke-linejoin="round"/></svg>
<svg class="a" style="left:344px;top:247px;" width="6" height="9" viewBox="0 0 6 9"><path d="M.5 .5L5.5 4.5L.5 8.5Z" fill="#b8d4f4" stroke="#2a4a80" stroke-width=".8"/></svg>
<svg class="a" style="left:329px;top:256px;" width="18" height="8" viewBox="0 0 18 8"><path d="M1 0V8M17 0V8M1 4H17M1 4L4 2M1 4L4 6M17 4L14 2M17 4L14 6" stroke="#d8d8d8" stroke-width="1" fill="none"/></svg>
<div class="t" style="left:355px;top:282px;font-size:10px;color:#ececec;letter-spacing:-0.1px">Линейное растяжение</div>
<svg class="a" style="left:327px;top:282px;" width="6" height="6" viewBox="0 0 6 6"><path d="M0.5 0.5L5.5 5.5M5.5 0.5L0.5 5.5" stroke="#4a90e0" stroke-width="1.1"/></svg>
<svg class="a" style="left:339px;top:275px;" width="10" height="13" viewBox="0 0 10 13"><path d="M1.9 0.4H9.4L6.6 4.4H8.6L0.7 12.6L2.8 6.7H0.2Z" fill="url(#bg)" stroke="#9a4a00" stroke-width=".7" stroke-linejoin="round"/></svg>
<svg class="a" style="left:344px;top:281px;" width="6" height="9" viewBox="0 0 6 9"><path d="M.5 .5L5.5 4.5L.5 8.5Z" fill="#b8d4f4" stroke="#2a4a80" stroke-width=".8"/></svg>
<svg class="a" style="left:329px;top:290px;" width="18" height="8" viewBox="0 0 18 8"><path d="M1 0V8M17 0V8M1 4H17M1 4L4 2M1 4L4 6M17 4L14 2M17 4L14 6" stroke="#d8d8d8" stroke-width="1" fill="none"/></svg>
<div class="t" style="left:355px;top:317px;font-size:10px;color:#ececec;letter-spacing:-0.1px">Линейный массив</div>
<svg class="a" style="left:327px;top:317px;" width="6" height="6" viewBox="0 0 6 6"><path d="M0.5 0.5L5.5 5.5M5.5 0.5L0.5 5.5" stroke="#4a90e0" stroke-width="1.1"/></svg>
<svg class="a" style="left:339px;top:310px;" width="10" height="13" viewBox="0 0 10 13"><path d="M1.9 0.4H9.4L6.6 4.4H8.6L0.7 12.6L2.8 6.7H0.2Z" fill="url(#bg)" stroke="#9a4a00" stroke-width=".7" stroke-linejoin="round"/></svg>
<svg class="a" style="left:344px;top:316px;" width="6" height="9" viewBox="0 0 6 9"><path d="M.5 .5L5.5 4.5L.5 8.5Z" fill="#b8d4f4" stroke="#2a4a80" stroke-width=".8"/></svg>
<svg class="a" style="left:329px;top:325px;" width="18" height="8" viewBox="0 0 18 8"><path d="M1 0V8M17 0V8M1 4H17M1 4L4 2M1 4L4 6M17 4L14 2M17 4L14 6" stroke="#d8d8d8" stroke-width="1" fill="none"/></svg>
<div class="t" style="left:355px;top:351px;font-size:10px;color:#ececec;letter-spacing:-0.1px">Пара линейных перемещений</div>
<svg class="a" style="left:329px;top:350px;" width="6" height="9" viewBox="0 0 6 9"><path d="M5.5 .5L.5 4.5L5.5 8.5Z" fill="#b8d4f4" stroke="#2a4a80" stroke-width=".8"/></svg>
<svg class="a" style="left:339px;top:344px;" width="10" height="13" viewBox="0 0 10 13"><path d="M1.9 0.4H9.4L6.6 4.4H8.6L0.7 12.6L2.8 6.7H0.2Z" fill="url(#bg)" stroke="#9a4a00" stroke-width=".7" stroke-linejoin="round"/></svg>
<svg class="a" style="left:344px;top:350px;" width="6" height="9" viewBox="0 0 6 9"><path d="M.5 .5L5.5 4.5L.5 8.5Z" fill="#b8d4f4" stroke="#2a4a80" stroke-width=".8"/></svg>
<svg class="a" style="left:329px;top:359px;" width="18" height="8" viewBox="0 0 18 8"><path d="M1 0V8M17 0V8M1 4H17M1 4L4 2M1 4L4 6M17 4L14 2M17 4L14 6" stroke="#d8d8d8" stroke-width="1" fill="none"/></svg>
<div class="t" style="left:355px;top:386px;font-size:10px;color:#ececec;letter-spacing:-0.1px">Пара линейных растяжений</div>
<svg class="a" style="left:329px;top:385px;" width="6" height="9" viewBox="0 0 6 9"><path d="M5.5 .5L.5 4.5L5.5 8.5Z" fill="#b8d4f4" stroke="#2a4a80" stroke-width=".8"/></svg>
<svg class="a" style="left:339px;top:379px;" width="10" height="13" viewBox="0 0 10 13"><path d="M1.9 0.4H9.4L6.6 4.4H8.6L0.7 12.6L2.8 6.7H0.2Z" fill="url(#bg)" stroke="#9a4a00" stroke-width=".7" stroke-linejoin="round"/></svg>
<svg class="a" style="left:344px;top:385px;" width="6" height="9" viewBox="0 0 6 9"><path d="M.5 .5L5.5 4.5L.5 8.5Z" fill="#b8d4f4" stroke="#2a4a80" stroke-width=".8"/></svg>
<svg class="a" style="left:329px;top:394px;" width="18" height="8" viewBox="0 0 18 8"><path d="M1 0V8M17 0V8M1 4H17M1 4L4 2M1 4L4 6M17 4L14 2M17 4L14 6" stroke="#d8d8d8" stroke-width="1" fill="none"/></svg>
<div class="t" style="left:355px;top:420px;font-size:10px;color:#ececec;letter-spacing:-0.1px">Полярное перемещение</div>
<svg class="a" style="left:334px;top:416px;" width="6" height="6" viewBox="0 0 6 6"><path d="M0.5 0.5L5.5 5.5M5.5 0.5L0.5 5.5" stroke="#4a90e0" stroke-width="1.1"/></svg>
<svg class="a" style="left:341px;top:413px;" width="10" height="13" viewBox="0 0 10 13"><path d="M1.9 0.4H9.4L6.6 4.4H8.6L0.7 12.6L2.8 6.7H0.2Z" fill="url(#bg)" stroke="#9a4a00" stroke-width=".7" stroke-linejoin="round"/></svg>
<svg class="a" style="left:343px;top:425px;" width="7" height="7" viewBox="0 0 7 7"><rect x=".6" y=".6" width="5.8" height="5.8" fill="url(#sq)" stroke="#1c3460" stroke-width="1.2"/></svg>
<svg class="a" style="left:326px;top:423px;" width="16" height="16" viewBox="0 0 16 16"><path d="M1 6L6 1M10 15L15 10M3.5 3.5L12.5 12.5M3.5 3.5L4 7M3.5 3.5L7 4M12.5 12.5L9 12M12.5 12.5L12 9" stroke="#d8d8d8" stroke-width="1" fill="none"/></svg>
<div class="t" style="left:355px;top:454px;font-size:10px;color:#ececec;letter-spacing:-0.1px">Полярное растяжение</div>
<svg class="a" style="left:334px;top:450px;" width="6" height="6" viewBox="0 0 6 6"><path d="M0.5 0.5L5.5 5.5M5.5 0.5L0.5 5.5" stroke="#4a90e0" stroke-width="1.1"/></svg>
<svg class="a" style="left:341px;top:447px;" width="10" height="13" viewBox="0 0 10 13"><path d="M1.9 0.4H9.4L6.6 4.4H8.6L0.7 12.6L2.8 6.7H0.2Z" fill="url(#bg)" stroke="#9a4a00" stroke-width=".7" stroke-linejoin="round"/></svg>
<svg class="a" style="left:343px;top:459px;" width="7" height="7" viewBox="0 0 7 7"><rect x=".6" y=".6" width="5.8" height="5.8" fill="url(#sq)" stroke="#1c3460" stroke-width="1.2"/></svg>
<svg class="a" style="left:326px;top:457px;" width="16" height="16" viewBox="0 0 16 16"><path d="M1 6L6 1M10 15L15 10M3.5 3.5L12.5 12.5M3.5 3.5L4 7M3.5 3.5L7 4M12.5 12.5L9 12M12.5 12.5L12 9" stroke="#d8d8d8" stroke-width="1" fill="none"/></svg>
<div class="t" style="left:355px;top:489px;font-size:10px;color:#ececec;letter-spacing:-0.1px">Круговой массив</div>
<svg class="a" style="left:334px;top:485px;" width="6" height="6" viewBox="0 0 6 6"><path d="M0.5 0.5L5.5 5.5M5.5 0.5L0.5 5.5" stroke="#4a90e0" stroke-width="1.1"/></svg>
<svg class="a" style="left:341px;top:482px;" width="10" height="13" viewBox="0 0 10 13"><path d="M1.9 0.4H9.4L6.6 4.4H8.6L0.7 12.6L2.8 6.7H0.2Z" fill="url(#bg)" stroke="#9a4a00" stroke-width=".7" stroke-linejoin="round"/></svg>
<svg class="a" style="left:343px;top:494px;" width="7" height="7" viewBox="0 0 7 7"><rect x=".6" y=".6" width="5.8" height="5.8" fill="url(#sq)" stroke="#1c3460" stroke-width="1.2"/></svg>
<svg class="a" style="left:326px;top:492px;" width="16" height="16" viewBox="0 0 16 16"><path d="M1 6L6 1M10 15L15 10M3.5 3.5L12.5 12.5M3.5 3.5L4 7M3.5 3.5L7 4M12.5 12.5L9 12M12.5 12.5L12 9" stroke="#d8d8d8" stroke-width="1" fill="none"/></svg>
<div class="t" style="left:355px;top:523px;font-size:10px;color:#ececec;letter-spacing:-0.1px">Пара полярных перемещений</div>
<svg class="a" style="left:334px;top:520px;" width="7" height="7" viewBox="0 0 7 7"><rect x=".6" y=".6" width="5.8" height="5.8" fill="url(#sq)" stroke="#1c3460" stroke-width="1.2"/></svg>
<svg class="a" style="left:341px;top:516px;" width="10" height="13" viewBox="0 0 10 13"><path d="M1.9 0.4H9.4L6.6 4.4H8.6L0.7 12.6L2.8 6.7H0.2Z" fill="url(#bg)" stroke="#9a4a00" stroke-width=".7" stroke-linejoin="round"/></svg>
<svg class="a" style="left:343px;top:528px;" width="7" height="7" viewBox="0 0 7 7"><rect x=".6" y=".6" width="5.8" height="5.8" fill="url(#sq)" stroke="#1c3460" stroke-width="1.2"/></svg>
<svg class="a" style="left:326px;top:526px;" width="16" height="16" viewBox="0 0 16 16"><path d="M1 6L6 1M10 15L15 10M3.5 3.5L12.5 12.5M3.5 3.5L4 7M3.5 3.5L7 4M12.5 12.5L9 12M12.5 12.5L12 9" stroke="#d8d8d8" stroke-width="1" fill="none"/></svg>
<div class="t" style="left:355px;top:558px;font-size:10px;color:#ececec;letter-spacing:-0.1px">Пара полярных растяжений</div>
<svg class="a" style="left:334px;top:555px;" width="7" height="7" viewBox="0 0 7 7"><rect x=".6" y=".6" width="5.8" height="5.8" fill="url(#sq)" stroke="#1c3460" stroke-width="1.2"/></svg>
<svg class="a" style="left:341px;top:551px;" width="10" height="13" viewBox="0 0 10 13"><path d="M1.9 0.4H9.4L6.6 4.4H8.6L0.7 12.6L2.8 6.7H0.2Z" fill="url(#bg)" stroke="#9a4a00" stroke-width=".7" stroke-linejoin="round"/></svg>
<svg class="a" style="left:343px;top:563px;" width="7" height="7" viewBox="0 0 7 7"><rect x=".6" y=".6" width="5.8" height="5.8" fill="url(#sq)" stroke="#1c3460" stroke-width="1.2"/></svg>
<svg class="a" style="left:326px;top:561px;" width="16" height="16" viewBox="0 0 16 16"><path d="M1 6L6 1M10 15L15 10M3.5 3.5L12.5 12.5M3.5 3.5L4 7M3.5 3.5L7 4M12.5 12.5L9 12M12.5 12.5L12 9" stroke="#d8d8d8" stroke-width="1" fill="none"/></svg>
<div class="t" style="left:355px;top:592px;font-size:10px;color:#ececec;letter-spacing:-0.1px">Перемещение XY</div>
<svg class="a" style="left:326px;top:586px;" width="8" height="13" viewBox="0 0 8 13"><path d="M0 1H8M0 12H8M4 1V12M4 1L2 4M4 1L6 4M4 12L2 9M4 12L6 9" stroke="#d8d8d8" stroke-width="1" fill="none"/></svg>
<svg class="a" style="left:334px;top:584px;" width="7" height="7" viewBox="0 0 7 7"><rect x=".6" y=".6" width="5.8" height="5.8" fill="url(#sq)" stroke="#1c3460" stroke-width="1.2"/></svg>
<svg class="a" style="left:342px;top:583px;" width="10" height="13" viewBox="0 0 10 13"><path d="M1.9 0.4H9.4L6.6 4.4H8.6L0.7 12.6L2.8 6.7H0.2Z" fill="url(#bg)" stroke="#9a4a00" stroke-width=".7" stroke-linejoin="round"/></svg>
<svg class="a" style="left:334px;top:595px;" width="6" height="6" viewBox="0 0 6 6"><path d="M0.5 0.5L5.5 5.5M5.5 0.5L0.5 5.5" stroke="#4a90e0" stroke-width="1.1"/></svg>
<svg class="a" style="left:346px;top:595px;" width="6" height="6" viewBox="0 0 6 6"><path d="M0.5 0.5L5.5 5.5M5.5 0.5L0.5 5.5" stroke="#4a90e0" stroke-width="1.1"/></svg>
<svg class="a" style="left:336px;top:601px;" width="13" height="8" viewBox="0 0 13 8"><path d="M1 0V8M12 0V8M1 4H12M1 4L4 2M1 4L4 6M12 4L9 2M12 4L9 6" stroke="#d8d8d8" stroke-width="1" fill="none"/></svg>
<div class="t" style="left:355px;top:626px;font-size:10px;color:#ececec;letter-spacing:-0.1px">Пара перемещений XY</div>
<svg class="a" style="left:326px;top:620px;" width="8" height="13" viewBox="0 0 8 13"><path d="M0 1H8M0 12H8M4 1V12M4 1L2 4M4 1L6 4M4 12L2 9M4 12L6 9" stroke="#d8d8d8" stroke-width="1" fill="none"/></svg>
<svg class="a" style="left:334px;top:618px;" width="7" height="7" viewBox="0 0 7 7"><rect x=".6" y=".6" width="5.8" height="5.8" fill="url(#sq)" stroke="#1c3460" stroke-width="1.2"/></svg>
<svg class="a" style="left:342px;top:617px;" width="10" height="13" viewBox="0 0 10 13"><path d="M1.9 0.4H9.4L6.6 4.4H8.6L0.7 12.6L2.8 6.7H0.2Z" fill="url(#bg)" stroke="#9a4a00" stroke-width=".7" stroke-linejoin="round"/></svg>
<svg class="a" style="left:334px;top:629px;" width="6" height="6" viewBox="0 0 6 6"><path d="M0.5 0.5L5.5 5.5M5.5 0.5L0.5 5.5" stroke="#4a90e0" stroke-width="1.1"/></svg>
<svg class="a" style="left:346px;top:629px;" width="6" height="6" viewBox="0 0 6 6"><path d="M0.5 0.5L5.5 5.5M5.5 0.5L0.5 5.5" stroke="#4a90e0" stroke-width="1.1"/></svg>
<svg class="a" style="left:336px;top:635px;" width="13" height="8" viewBox="0 0 13 8"><path d="M1 0V8M12 0V8M1 4H12M1 4L4 2M1 4L4 6M12 4L9 2M12 4L9 6" stroke="#d8d8d8" stroke-width="1" fill="none"/></svg>
<div class="a" style="left:312px;top:632px;width:198px;height:7px;background:#585858"></div>
<div class="a" style="left:510px;top:200px;width:17px;height:98px;background:#4b4b4b;border:1px solid #3a3a3a;border-left:none;border-radius:0 3px 3px 0"></div>
<div class="t" style="left:518.5px;top:249.0px;transform:translate(-50%,-50%) rotate(-90deg);font-size:10px;color:#9c9c9c;letter-spacing:-0.1px">Параметры</div>
<div class="a" style="left:510px;top:298px;width:17px;height:99px;background:#4b4b4b;border:1px solid #3a3a3a;border-left:none;border-radius:0 3px 3px 0"></div>
<div class="t" style="left:518.5px;top:347.5px;transform:translate(-50%,-50%) rotate(-90deg);font-size:10px;color:#9c9c9c;letter-spacing:-0.1px">Операции</div>
<div class="a" style="left:510px;top:397px;width:17px;height:100px;background:#585858;border-radius:0 3px 3px 0"></div>
<div class="t" style="left:518.5px;top:447.0px;transform:translate(-50%,-50%) rotate(-90deg);font-size:10px;color:#f4f4f4;letter-spacing:-0.1px">Наборы параметров</div>
<div class="a" style="left:510px;top:497px;width:17px;height:99px;background:#4b4b4b;border:1px solid #3a3a3a;border-left:none;border-radius:0 3px 3px 0"></div>
<div class="t" style="left:518.5px;top:546.5px;transform:translate(-50%,-50%) rotate(-90deg);font-size:10px;color:#9c9c9c;letter-spacing:-0.1px">Зависимости</div>
<svg class="a" style="left:529px;top:180px;" width="388" height="460" viewBox="0 0 388 460"><rect width="100%" height="100%" fill="#a2a2a2"/><rect x="14" y="0" width="1" height="460" fill="#929ab6"/><rect x="31" y="0" width="1" height="460" fill="#929ab6"/><rect x="49" y="0" width="1" height="460" fill="#8896c8"/><rect x="66" y="0" width="1" height="460" fill="#929ab6"/><rect x="84" y="0" width="1" height="460" fill="#929ab6"/><rect x="102" y="0" width="1" height="460" fill="#929ab6"/><rect x="119" y="0" width="1" height="460" fill="#929ab6"/><rect x="137" y="0" width="1" height="460" fill="#8896c8"/><rect x="154" y="0" width="1" height="460" fill="#929ab6"/><rect x="172" y="0" width="1" height="460" fill="#929ab6"/><rect x="190" y="0" width="1" height="460" fill="#929ab6"/><rect x="207" y="0" width="1" height="460" fill="#929ab6"/><rect x="225" y="0" width="1" height="460" fill="#8896c8"/><rect x="242" y="0" width="1" height="460" fill="#929ab6"/><rect x="260" y="0" width="1" height="460" fill="#929ab6"/><rect x="278" y="0" width="1" height="460" fill="#929ab6"/><rect x="295" y="0" width="1" height="460" fill="#929ab6"/><rect x="313" y="0" width="1" height="460" fill="#8896c8"/><rect x="330" y="0" width="1" height="460" fill="#929ab6"/><rect x="348" y="0" width="1" height="460" fill="#929ab6"/><rect x="366" y="0" width="1" height="460" fill="#929ab6"/><rect x="383" y="0" width="1" height="460" fill="#929ab6"/><rect x="0" y="14" width="388" height="1" fill="#929ab6"/><rect x="0" y="32" width="388" height="1" fill="#929ab6"/><rect x="0" y="49" width="388" height="1" fill="#929ab6"/><rect x="0" y="67" width="388" height="1" fill="#929ab6"/><rect x="0" y="84" width="388" height="1" fill="#8896c8"/><rect x="0" y="102" width="388" height="1" fill="#929ab6"/><rect x="0" y="119" width="388" height="1" fill="#929ab6"/><rect x="0" y="137" width="388" height="1" fill="#929ab6"/><rect x="0" y="154" width="388" height="1" fill="#929ab6"/><rect x="0" y="172" width="388" height="1" fill="#8896c8"/><rect x="0" y="189" width="388" height="1" fill="#929ab6"/><rect x="0" y="207" width="388" height="1" fill="#929ab6"/><rect x="0" y="224" width="388" height="1" fill="#929ab6"/><rect x="0" y="242" width="388" height="1" fill="#929ab6"/><rect x="0" y="259" width="388" height="1" fill="#8896c8"/><rect x="0" y="277" width="388" height="1" fill="#929ab6"/><rect x="0" y="294" width="388" height="1" fill="#929ab6"/><rect x="0" y="312" width="388" height="1" fill="#929ab6"/><rect x="0" y="329" width="388" height="1" fill="#929ab6"/><rect x="0" y="347" width="388" height="1" fill="#8896c8"/><rect x="0" y="364" width="388" height="1" fill="#929ab6"/><rect x="0" y="382" width="388" height="1" fill="#929ab6"/><rect x="0" y="399" width="388" height="1" fill="#929ab6"/><rect x="0" y="417" width="388" height="1" fill="#929ab6"/><rect x="0" y="434" width="388" height="1" fill="#8896c8"/><rect x="0" y="452" width="388" height="1" fill="#929ab6"/><circle cx="193" cy="230.5" r="164.5" fill="none" stroke="#1e1e1e" stroke-width="1.5"/><circle cx="191.79999999999995" cy="237.8" r="73.8" fill="none" stroke="#1e1e1e" stroke-width="1.5"/><circle cx="191.39999999999998" cy="232.39999999999998" r="41.2" fill="none" stroke="#1e1e1e" stroke-width="1.5"/></svg>
<svg class="a" style="left:864px;top:188px;" width="48" height="12" viewBox="0 0 48 12"><rect x="2" y="5" width="10" height="3" fill="#f4f4f4" stroke="#444" stroke-width=".8"/><rect x="21" y="3" width="7" height="7" fill="none" stroke="#444" stroke-width="2.6"/><rect x="21" y="3" width="7" height="7" fill="none" stroke="#f4f4f4" stroke-width="1.2"/><rect x="23" y="1" width="6" height="6" fill="none" stroke="#f4f4f4" stroke-width="1"/><path d="M37 2L44 9M44 2L37 9" stroke="#444" stroke-width="3"/><path d="M37 2L44 9M44 2L37 9" stroke="#f4f4f4" stroke-width="1.5"/></svg>
<svg class="a" style="left:836px;top:210px;" width="72" height="72" viewBox="0 0 72 72"><circle cx="35.2" cy="35.2" r="28.1" fill="none" stroke="#c4c4c4" stroke-width="6.8" stroke-opacity=".62"/></svg>
<div class="a" style="left:858px;top:232px;width:27px;height:26px;background:#d2d2d2;border:1px solid #9a9a9a"></div>
<div class="a" style="left:862px;top:236px;width:19px;height:18px;background:#d8d8dc"></div>
<div class="t" style="left:858px;top:239px;width:27px;text-align:center;font-size:8.5px;line-height:11px;color:#5c5c68;letter-spacing:-0.5px;-webkit-text-stroke:0">Сверху</div>
<div class="t" style="left:866px;top:210px;font-size:10.5px;color:#d8d8d8;text-shadow:0 0 1px #777">С</div>
<div class="t" style="left:838px;top:239px;font-size:10px;color:#d8d8d8;text-shadow:0 0 1px #777">З</div>
<div class="t" style="left:897px;top:239px;font-size:10.5px;color:#d8d8d8;text-shadow:0 0 1px #777">В</div>
<div class="t" style="left:865px;top:269px;font-size:10px;color:#d8d8d8;text-shadow:0 0 1px #777">Ю</div>
<div class="a" style="left:851px;top:292px;width:39px;height:13px;background:#b4b6c0;border-radius:3px;border:1px solid #c0c0c8"></div>
<div class="t" style="left:855px;top:292px;font-size:9.5px;line-height:12px;color:#6a6a70">МСК</div>
<svg class="a" style="left:879px;top:296px;" width="7" height="5" viewBox="0 0 7 5"><path d="M.5 .5H6.5L3.5 4Z" fill="none" stroke="#8a8a90" stroke-width=".8"/></svg>
<div class="a" style="left:887px;top:326px;width:28px;height:174px;background:rgba(178,178,178,.86);border:1px solid #8a8a8a;border-radius:4px"></div>
<svg class="a" style="left:887px;top:326px;" width="28" height="174" viewBox="0 0 28 174"><circle cx="22" cy="6" r="3" fill="none" stroke="#959595"/><path d="M20.5 4.5L23.5 7.5M23.5 4.5L20.5 7.5" stroke="#959595" stroke-width=".7"/><path d="M5.5 25A8.8 8.8 0 1 0 23 25V19Q23 16 20 16H14.3A8.8 8.8 0 0 0 5.5 25Z" fill="none" stroke="#959595" stroke-width="1.1"/><circle cx="14.3" cy="25" r="4.8" fill="none" stroke="#959595" stroke-width="1.1"/><path d="M12 41H16L14 43Z" fill="#959595"/><path d="M4 46H24" stroke="#a2a2a2" stroke-dasharray="1 1"/><path d="M9 67Q4 62 4 59Q5 57 8 60V52Q9 50 10.5 52V57M10.5 57V50Q12 48 13.5 50V57M13.5 57V50.5Q15 49 16.5 51V57M16.5 57V52Q18 51 19 53V60Q21 57 23 58Q22 63 18 68H9Z" fill="none" stroke="#959595" stroke-width="1"/><path d="M4 74L16 86M4 74H8M4 74V78M17 74L4 87M17 74H13M17 74V78M4 87H8M4 87V83" stroke="#959595" stroke-width="1" fill="none"/><circle cx="17.8" cy="86.8" r="4" fill="none" stroke="#959595" stroke-width="1.2"/><path d="M20.5 89.5L23.5 92.5" stroke="#959595" stroke-width="2"/><path d="M12 98H16L14 100Z" fill="#959595"/><path d="M13 105V123M13 105L10 109H16Z" stroke="#959595" stroke-width="1.2" fill="none"/><ellipse cx="13" cy="115" rx="9" ry="4.5" fill="none" stroke="#959595" stroke-width="1.1"/><path d="M12 130H16L14 132Z" fill="#959595"/><path d="M4 135H24" stroke="#a2a2a2" stroke-dasharray="1 1"/><rect x="4.5" y="140" width="5" height="5" fill="none" stroke="#959595"/><rect x="11.5" y="140" width="5" height="5" fill="none" stroke="#959595"/><rect x="18.5" y="140" width="5" height="5" fill="none" stroke="#959595"/><rect x="4.5" y="147.5" width="14" height="10" fill="none" stroke="#959595"/><path d="M9 150V155.5L14 152.7Z" fill="#959595"/><circle cx="22" cy="169" r="2.5" fill="none" stroke="#959595"/></svg>
<svg class="a" style="left:534px;top:572px;" width="66" height="64" viewBox="0 0 66 64"><path d="M6.5 15V56.5H47" stroke="#1a1a1a" stroke-width="1.2" fill="none"/><rect x="3.5" y="53.5" width="6" height="6" fill="none" stroke="#1a1a1a" stroke-width="1.2"/><path d="M9 2L13 8L17 2M13 8V13" stroke="#1a1a1a" stroke-width="1.2" fill="none"/><path d="M51 46L62 57M62 46L51 57" stroke="#1a1a1a" stroke-width="1.3"/></svg>
<div class="a" style="left:621px;top:619px;width:46px;height:21px;background:linear-gradient(#6a6a6a,#4e4e4e);border-radius:3px 0 0 3px"></div>
<div class="a" style="left:625px;top:622px;width:3px;height:14px;background:repeating-linear-gradient(#8a8a8a 0 1px,transparent 1px 2px)"></div>
<svg class="a" style="left:632px;top:624px;" width="9" height="9" viewBox="0 0 9 9"><path d="M1 1L8 8M8 1L1 8" stroke="#f0f0f0" stroke-width="1.5"/></svg>
<svg class="a" style="left:648px;top:622px;" width="14" height="14" viewBox="0 0 14 14"><path d="M2 12L8 6" stroke="#f0f0f0" stroke-width="2.2"/><path d="M7 7Q6 3 9 1.5L10 4L12 4.5L13 2Q14 6 10 8Z" fill="#f0f0f0"/></svg>
<div class="a" style="left:667px;top:619px;width:159px;height:21px;background:#d9d9d9;border:1px solid #b0b0b0;border-radius:0 3px 3px 0"></div>
<svg class="a" style="left:671px;top:623px;" width="22" height="12" viewBox="0 0 22 12"><rect x=".5" y="1.5" width="13" height="9" fill="none" stroke="#707070"/><path d="M3 5L5 6L3 7M6 8H9" stroke="#707070" stroke-width=".8" fill="none"/><path d="M16 4H21L18.5 7Z" fill="#707070"/></svg>
<div class="t" style="left:696px;top:623px;font-family:Liberation Mono,monospace;font-style:italic;font-size:9px;color:#8a8a8a">Введите&nbsp; команду</div>
<svg class="a" style="left:815px;top:626px;" width="8" height="5" viewBox="0 0 8 5"><path d="M0 5H8L4 0Z" fill="#333"/></svg>
<div class="a" style="left:33px;top:639px;width:884px;height:1px;background:#636363"></div>
<div class="a" style="left:33px;top:640px;width:884px;height:24px;background:#3a3a3a"></div>
<svg class="a" style="left:40px;top:640px;" width="60" height="16" viewBox="0 0 60 16"><path d="M0 0Q6 0 8 6Q10 15 16 15.5H56Q59 15 60 11L60 0Z" fill="#666"/></svg>
<svg class="a" style="left:40px;top:640px;" width="60" height="16" viewBox="0 0 60 16"><defs><linearGradient id="mt" x1="0" y1="0" x2="0" y2="1"><stop offset="0" stop-color="#6e6e6e"/><stop offset="1" stop-color="#5a5a5a"/></linearGradient></defs><path d="M0 0Q6 0 8 6Q10 15 16 15.5H54Q58 15 59 8L60 0Z" fill="url(#mt)"/></svg>
<div class="t" style="left:52px;top:643px;font-size:10px;font-weight:bold;color:#f8f8f8;letter-spacing:-0.1px">Модель</div>
<svg class="a" style="left:99px;top:640px;" width="46" height="16" viewBox="0 0 46 16"><path d="M0 0Q3 0 4 6Q5 15 10 15.5H40Q43 15 44 8L46 0Z" fill="#505050"/></svg>
<div class="t" style="left:108px;top:643px;font-size:10.5px;color:#b8b8b8;letter-spacing:-0.2px">Лист1</div>
<svg class="a" style="left:145px;top:640px;" width="47" height="16" viewBox="0 0 47 16"><path d="M0 0Q3 0 4 6Q5 15 10 15.5H41Q44 15 45 8L47 0Z" fill="#505050"/></svg>
<div class="t" style="left:154px;top:643px;font-size:10.5px;color:#b8b8b8;letter-spacing:-0.2px">Лист2</div>
<svg class="a" style="left:192px;top:640px;" width="20" height="16" viewBox="0 0 20 16"><path d="M0 0Q3 0 4 6Q5 15 10 15.5H14Q17 15 18 8L20 0Z" fill="#505050"/></svg>
<svg class="a" style="left:198px;top:643px;" width="8" height="8" viewBox="0 0 8 8"><path d="M4 0V8M0 4H8" stroke="#d8d8d8" stroke-width="1.6"/></svg>
<div class="a" style="left:467px;top:641px;width:47px;height:22px;background:#464646;border:1px solid #5a5a5a"></div>
<div class="t" style="left:471px;top:646px;font-size:10px;color:#f0f0f0;letter-spacing:-0.5px">МОДЕЛЬ</div>
<div class="a" style="left:515px;top:641px;width:56px;height:22px;background:#464646;border:1px solid #5a5a5a"></div>
<div class="a" style="left:571px;top:641px;width:136px;height:22px;background:#464646;border:1px solid #5a5a5a"></div>
<div class="a" style="left:709px;top:641px;width:88px;height:22px;background:#464646;border:1px solid #5a5a5a"></div>
<div class="a" style="left:799px;top:641px;width:53px;height:22px;background:#464646;border:1px solid #5a5a5a"></div>
<div class="a" style="left:853px;top:641px;width:20px;height:22px;background:#464646;border:1px solid #5a5a5a"></div>
<div class="a" style="left:875px;top:641px;width:41px;height:22px;background:#464646;border:1px solid #5a5a5a"></div>
<div class="a" style="left:517px;top:643px;width:18px;height:17px;background:#4f86c8"></div>
<svg class="a" style="left:518px;top:644px;" width="16" height="16" viewBox="0 0 16 16"><path d="M4.5 1V15M8 1V15M11.5 1V15M1 4.5H15M1 8H15M1 11.5H15" stroke="#fff" stroke-width="1.3"/></svg>
<svg class="a" style="left:540px;top:646px;" width="12" height="12" viewBox="0 0 12 12"><rect x="1" y="1" width="1.6" height="1.6" fill="#eee"/><rect x="1" y="5" width="1.6" height="1.6" fill="#eee"/><rect x="1" y="9" width="1.6" height="1.6" fill="#eee"/><rect x="5" y="1" width="1.6" height="1.6" fill="#eee"/><rect x="5" y="5" width="1.6" height="1.6" fill="#eee"/><rect x="5" y="9" width="1.6" height="1.6" fill="#eee"/><rect x="9" y="1" width="1.6" height="1.6" fill="#eee"/><rect x="9" y="5" width="1.6" height="1.6" fill="#eee"/><rect x="9" y="9" width="1.6" height="1.6" fill="#eee"/></svg>
<svg class="a" style="left:559px;top:650px;" width="7" height="4" viewBox="0 0 7 4"><path d="M0 0H7L3.5 4Z" fill="#e8e8e8"/></svg>
<svg class="a" style="left:574px;top:645px;" width="14" height="14" viewBox="0 0 14 14"><path d="M2 1V12H13M2 8H6V12" stroke="#e0e0e0" stroke-width="1.1" fill="none"/></svg>
<svg class="a" style="left:593px;top:645px;" width="14" height="14" viewBox="0 0 14 14"><circle cx="6.5" cy="8" r="5" fill="none" stroke="#e0e0e0" stroke-width="1.1"/><path d="M6.5 8L13 2M6.5 8H13" stroke="#e0e0e0" stroke-width="1.1"/></svg>
<svg class="a" style="left:613px;top:650px;" width="7" height="4" viewBox="0 0 7 4"><path d="M0 0H7L3.5 4Z" fill="#e8e8e8"/></svg>
<svg class="a" style="left:625px;top:644px;" width="12" height="16" viewBox="0 0 12 16"><path d="M6 0V16" stroke="#40b040" stroke-width="1.1"/><path d="M1 3L11 13" stroke="#e04040" stroke-width="1.1"/><circle cx="6" cy="8" r="1.5" fill="#ddd"/></svg>
<svg class="a" style="left:645px;top:650px;" width="7" height="4" viewBox="0 0 7 4"><path d="M0 0H7L3.5 4Z" fill="#e8e8e8"/></svg>
<div class="a" style="left:655px;top:643px;width:18px;height:17px;background:#4f86c8"></div>
<svg class="a" style="left:657px;top:646px;" width="14" height="12" viewBox="0 0 14 12"><path d="M1 11H13M1 11L11 2" stroke="#fff" stroke-width="1.2" fill="none"/><path d="M6 11Q6 7 4 6" stroke="#fff" fill="none"/></svg>
<div class="a" style="left:675px;top:643px;width:18px;height:17px;background:#4f86c8"></div>
<svg class="a" style="left:677px;top:644px;" width="15" height="15" viewBox="0 0 15 15"><rect x="2" y="3" width="11" height="11" fill="none" stroke="#fff" stroke-width="1.2"/><rect x="1" y="1" width="4" height="4" fill="#4f86c8" stroke="#fff"/></svg>
<svg class="a" style="left:696px;top:650px;" width="7" height="4" viewBox="0 0 7 4"><path d="M0 0H7L3.5 4Z" fill="#e8e8e8"/></svg>
<div class="a" style="left:711px;top:643px;width:18px;height:17px;background:#4f86c8"></div>
<svg class="a" style="left:712px;top:644px;" width="18" height="16" viewBox="0 0 18 16"><path transform="translate(1,0)" d="M7 1L9.3 8.2L13.5 14.5L7.5 11.5L1.5 14.5L5 8.2Z" fill="#fff"/><circle cx="14" cy="5" r="2.6" fill="none" stroke="#fff" stroke-width="1.1"/></svg>
<svg class="a" style="left:732px;top:644px;" width="18" height="16" viewBox="0 0 18 16"><path transform="translate(1,0)" d="M7 1L9.3 8.2L13.5 14.5L7.5 11.5L1.5 14.5L5 8.2Z" fill="#ddd"/><path d="M14 0.5L11 5.5H13L11 9.5L16 4.5H14Z" fill="#ddd"/></svg>
<svg class="a" style="left:753px;top:644px;" width="16" height="16" viewBox="0 0 16 16"><path transform="translate(0.5,0)" d="M7 1L9.3 8.2L13.5 14.5L7.5 11.5L1.5 14.5L5 8.2Z" fill="#ddd"/></svg>
<div class="t" style="left:773px;top:646px;font-size:10.5px;color:#e0e0e0;letter-spacing:-0.5px">1:1</div>
<svg class="a" style="left:789px;top:650px;" width="7" height="4" viewBox="0 0 7 4"><path d="M0 0H7L3.5 4Z" fill="#e8e8e8"/></svg>
<svg class="a" style="left:802px;top:644px;" width="15" height="15" viewBox="0 0 15 15"><circle cx="7.5" cy="7.5" r="4.5" fill="none" stroke="#e0e0e0" stroke-width="3"/><path d="M7.5 0V15M0 7.5H15M2.2 2.2L12.8 12.8M12.8 2.2L2.2 12.8" stroke="#e0e0e0" stroke-width="2" stroke-dasharray="2 11"/></svg>
<svg class="a" style="left:822px;top:650px;" width="7" height="4" viewBox="0 0 7 4"><path d="M0 0H7L3.5 4Z" fill="#e8e8e8"/></svg>
<svg class="a" style="left:834px;top:644px;" width="15" height="15" viewBox="0 0 15 15"><path d="M7.5 1V14M1 7.5H14" stroke="#f0f0f0" stroke-width="1.6"/></svg>
<svg class="a" style="left:856px;top:643px;" width="15" height="16" viewBox="0 0 15 16"><rect x="1" y="1" width="6" height="6" fill="none" stroke="#e0e0e0"/><circle cx="11.5" cy="6" r="3" fill="none" stroke="#e0e0e0"/><path d="M7 15L10 10L13 15Z" fill="none" stroke="#e0e0e0"/></svg>
<svg class="a" style="left:879px;top:644px;" width="15" height="14" viewBox="0 0 15 14"><rect x="1" y="1" width="13" height="12" fill="none" stroke="#e0e0e0" stroke-width="1.1"/><path d="M4 10L11 4M4 10V7.5M4 10H6.5M11 4V6.5M11 4H8.5" stroke="#e0e0e0" fill="none"/></svg>
<svg class="a" style="left:898px;top:645px;" width="15" height="13" viewBox="0 0 15 13"><path d="M1 2H14M1 6.5H14M1 11H14" stroke="#f0f0f0" stroke-width="1.6"/></svg>
<svg class="a" style="left:40px;top:540px;" width="276" height="40" viewBox="0 0 276 40"><defs><filter id="sh" x="-10%" y="-50%" width="120%" height="200%"><feGaussianBlur stdDeviation="1.2"/></filter></defs><rect x="9" y="11.5" width="258" height="20.5" rx="14" ry="10.2" fill="none" stroke="#000" stroke-opacity=".5" stroke-width="4" filter="url(#sh)"/><rect x="8.5" y="9.8" width="257.5" height="20.5" rx="14" ry="10.2" fill="none" stroke="#ff0000" stroke-width="4.2"/></svg>
</body></html>
